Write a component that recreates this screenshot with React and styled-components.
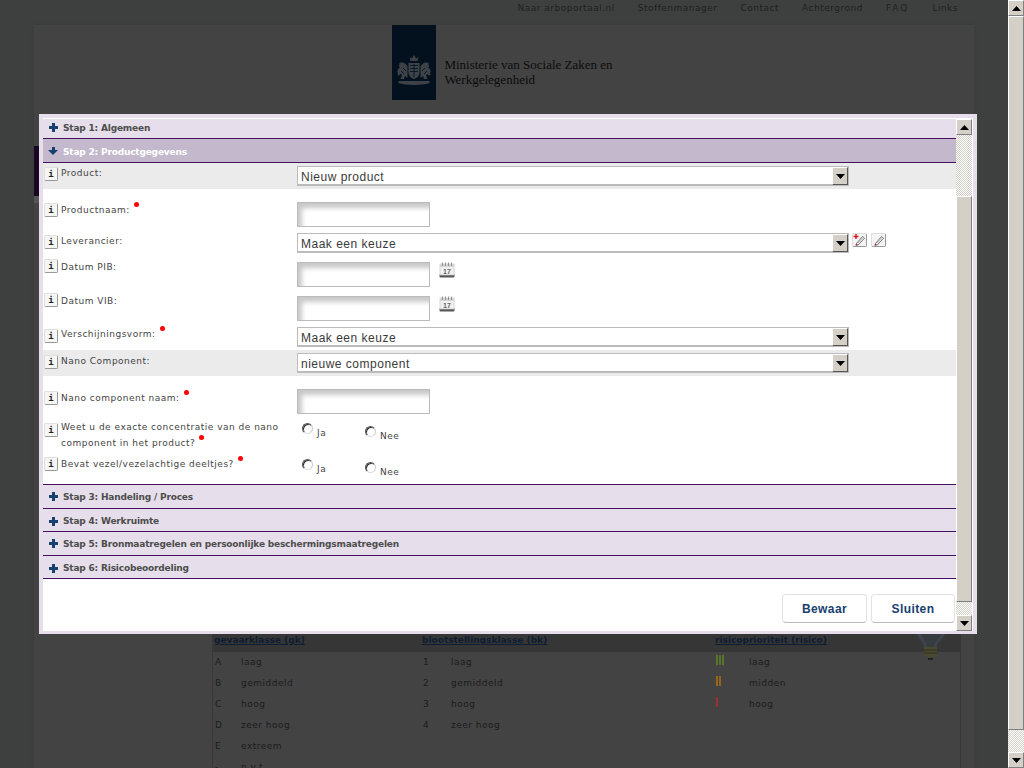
import React from "react";
import styled, { createGlobalStyle, css } from "styled-components";

const GlobalStyle = createGlobalStyle`
  html, body {
    margin: 0;
    padding: 0;
    height: 768px;
    overflow: hidden;
    background: #3d403f;
  }
  * { box-sizing: border-box; }
`;

const NAV_LINKS = ["Naar arboportaal.nl", "Stoffenmanager", "Contact", "Achtergrond", "FAQ", "Links"];

const ROWS = [
  { label: "Product:", kind: "select", value: "Nieuw product", gray: true, height: 26, labelTop: 4, fieldTop: 3, shift: -1 },
  { label: "Productnaam:", kind: "input", required: true, height: 44, labelTop: 14, fieldTop: 13, shift: -1 },
  { label: "Leverancier:", kind: "select", value: "Maak een keuze", edit: true, height: 26, labelTop: 2, fieldTop: 0, shift: -1 },
  { label: "Datum PIB:", kind: "date", height: 34, labelTop: 0, fieldTop: 3, shift: 1 },
  { label: "Datum VIB:", kind: "date", height: 34, labelTop: 0, fieldTop: 3, shift: 1 },
  { label: "Verschijningsvorm:", kind: "select", value: "Maak een keuze", required: true, height: 23, labelTop: 2, fieldTop: 0, shift: -3 },
  { label: "Nano Component:", kind: "select", value: "nieuwe component", gray: true, height: 26, labelTop: 5, fieldTop: 3, shift: -1 },
  { label: "Nano component naam:", kind: "input", required: true, height: 47, labelTop: 15, fieldTop: 13, shift: -1 },
  { label: "Weet u de exacte concentratie van de nano component in het product?", kind: "radio", required: true, height: 34, labelTop: 0, fieldTop: 0, shift: -3 },
  { label: "Bevat vezel/vezelachtige deeltjes?", kind: "radio", required: true, height: 27, labelTop: 0, fieldTop: 2, shift: -1 },
];

const LEGEND = [
  { title: "gevaarklasse (gk)", width: 208, keyWidth: 26, items: [["A", "laag"], ["B", "gemiddeld"], ["C", "hoog"], ["D", "zeer hoog"], ["E", "extreem"], ["-", "n.v.t."]] },
  { title: "blootstellingsklasse (bk)", width: 293, keyWidth: 28, items: [["1", "laag"], ["2", "gemiddeld"], ["3", "hoog"], ["4", "zeer hoog"]] },
  { title: "risicoprioriteit (risico)", width: 246, keyWidth: 33, items: [[3, "laag"], [2, "midden"], [1, "hoog"]] },
];

const BAR_COLORS = { 3: "#55752c", 2: "#98661a", 1: "#98303a" };

function Arrow({ up }) {
  return (
    <ArrowSvg width="9" height="5" viewBox="0 0 9 5">
      <path d={up ? "M4.5 0 L9 5 L0 5 Z" : "M0 0 L9 0 L4.5 5 Z"} fill="#000" />
    </ArrowSvg>
  );
}

function Scrollbar({ inner }) {
  return (
    <ScrollTrack $inner={inner}>
      <ScrollButton><Arrow up /></ScrollButton>
      <Checker $height={inner ? 61 : 0} />
      <Thumb $inner={inner} />
      <Checker $height={inner ? 13 : 22} />
      <ScrollButton><Arrow /></ScrollButton>
    </ScrollTrack>
  );
}

function PencilIcon({ plus }) {
  return (
    <IconButton>
      <svg width="13" height="12" viewBox="0 0 13 12">
        <path d="M3.5 9.5 L9.5 2.5 L11.5 4.2 L5.2 11 L3 11.2 Z" fill="#f4f4f4" stroke="#666" strokeWidth="0.9" />
        <path d="M5 9 L10 3.5" stroke="#aaa" strokeWidth="0.8" />
        <path d="M2.5 11.5 L3.2 9.6 L4.8 11 Z" fill="#d8141c" />
        {plus && <path d="M3 0 V5 M0.5 2.5 H5.5" stroke="#d8141c" strokeWidth="1.4" />}
      </svg>
    </IconButton>
  );
}

function CalendarIcon() {
  return (
    <CalendarSvg width="16" height="16" viewBox="0 0 16 16">
      <rect x="0.5" y="12" width="15" height="3.5" rx="1" fill="#55585a" />
      <rect x="1" y="2" width="14" height="11" fill="#f1f1f1" stroke="#c5c5c5" strokeWidth="0.7" />
      <rect x="1" y="2" width="14" height="3" fill="#d4d4d4" />
      <path d="M3.5 0.5 V4 M6.5 0.5 V4 M9.5 0.5 V4 M12.5 0.5 V4" stroke="#888" strokeWidth="0.9" />
      <text x="8" y="11.5" fontSize="7" fontWeight="700" textAnchor="middle" fontFamily="Liberation Sans, sans-serif" fill="#666">17</text>
    </CalendarSvg>
  );
}

function CoatOfArms() {
  return (
    <svg width="38" height="34" viewBox="0 0 38 34">
      <g fill="#3c4247">
        <path d="M15.5 7 L14.5 3 L16.8 4.4 L19 1 L21.2 4.4 L23.5 3 L22.5 7 Z" />
        <path d="M13.5 9 H24.5 V18 C24.5 22 22 24 19 25 C16 24 13.5 22 13.5 18 Z" />
        <path d="M12.5 12 C10 9 8 8 7 8.5 C5 8 3.5 9.5 4.5 11 C3.5 11.5 3.5 13 5 13.5 C2.5 15 1.5 17.5 3 19 C2 20 2.5 21.5 4 21.5 L5.5 20 L7 21 L5.5 25 L9 25 L10 22 L12.5 24 Z" />
        <path d="M25.5 12 C28 9 30 8 31 8.5 C33 8 34.5 9.5 33.5 11 C34.5 11.5 34.5 13 33 13.5 C35.5 15 36.5 17.5 35 19 C36 20 35.5 21.5 34 21.5 L32.5 20 L31 21 L32.5 25 L29 25 L28 22 L25.5 24 Z" />
        <path d="M4 27 H34 L35 29 C27 31.5 11 31.5 3 29 Z" />
      </g>
      <path d="M15 11.5 H23 M15 14.5 H23 M15 17.5 H23 M19 10 V23 M8 14 L11 17 M30 14 L27 17 M6 17 L9 20 M32 17 L29 20" stroke="#03101e" strokeWidth="0.8" />
    </svg>
  );
}

function Bulb() {
  return (
    <BulbSvg width="28" height="27" viewBox="0 0 28 27">
      <path d="M0 0 C2 6 7 8 7 13 H20 C20 8 26 6 28 0 Z" fill="#3e444e" />
      <path d="M4 0 C6 5 10 8 10 13 H17 C17 8 22 5 24 0 Z" fill="#373a3f" />
      <path d="M7 13 H20 V21 C20 24 7 24 7 21 Z" fill="#4a4a33" />
      <path d="M7 16 H20 M7 19 H20" stroke="#2f2e20" strokeWidth="1" />
      <path d="M11 24 H16 V26 H11 Z" fill="#222" />
    </BulbSvg>
  );
}

function Field({ row }) {
  if (row.kind === "select") {
    return (
      <FieldLine>
        <SelectBox>
          <SelectText>{row.value}</SelectText>
          <SelectArrow><Arrow /></SelectArrow>
        </SelectBox>
        {row.edit && (
          <EditIcons>
            <PencilIcon plus />
            <PencilIcon />
          </EditIcons>
        )}
      </FieldLine>
    );
  }
  if (row.kind === "radio") {
    return (
      <FieldLine>
        <RadioOption $width={63} $top={0}><Radio /><RadioLabel>Ja</RadioLabel></RadioOption>
        <RadioOption $top={3}><Radio /><RadioLabel>Nee</RadioLabel></RadioOption>
      </FieldLine>
    );
  }
  return (
    <FieldLine>
      <TextBox />
      {row.kind === "date" && <CalendarIcon />}
    </FieldLine>
  );
}

function App() {
  return (
    <>
      <GlobalStyle />
      <Page>
        <Main>
          <TopNav>
            {NAV_LINKS.map((link) => (
              <NavLink key={link} $wide={link === "FAQ"}>{link}</NavLink>
            ))}
          </TopNav>
          <Card>
            <Brand>
              <LogoTile><CoatOfArms /></LogoTile>
              <BrandName>Ministerie van Sociale Zaken en<br />Werkgelegenheid</BrandName>
            </Brand>
            <PurpleNav />
            <NavShadow />
            <Legend>
              {LEGEND.map((col) => (
                <LegendColumn key={col.title} $width={col.width}>
                  <LegendTitle>{col.title}</LegendTitle>
                  {col.items.map(([key, text]) => (
                    <LegendRow key={text}>
                      <LegendKey $width={col.keyWidth}>
                        {typeof key === "number" ? (
                          <Bars>
                            {Array.from({ length: key }).map((_, i) => (
                              <Bar key={i} $color={BAR_COLORS[key]} />
                            ))}
                          </Bars>
                        ) : key}
                      </LegendKey>
                      {text}
                    </LegendRow>
                  ))}
                </LegendColumn>
              ))}
              <Bulb />
            </Legend>
          </Card>
        </Main>
        <Scrollbar />

        <Modal>
          <ModalBody>
            <Steps>
              <StepHeader $height={20} $nudge={-1}>
                <StepIcon />Stap 1: Algemeen
              </StepHeader>
              <StepHeader $open $height={24} $nudge={1}>
                <StepIcon $open />Stap 2: Productgegevens
              </StepHeader>
              {ROWS.map((row) => (
                <FormRow key={row.label} $gray={row.gray} $height={row.height}>
                  <LabelCell $top={row.labelTop}>
                    <InfoButton>i</InfoButton>
                    <Label $shift={row.shift}>
                      {row.label}
                      {row.required && <RequiredDot />}
                    </Label>
                  </LabelCell>
                  <FieldCell $top={row.fieldTop}>
                    <Field row={row} />
                  </FieldCell>
                </FormRow>
              ))}
              <Divider />
              <StepHeader $height={24}><StepIcon />Stap 3: Handeling / Proces</StepHeader>
              <StepHeader $height={23} $nudge={1}><StepIcon />Stap 4: Werkruimte</StepHeader>
              <StepHeader $height={24}><StepIcon />Stap 5: Bronmaatregelen en persoonlijke beschermingsmaatregelen</StepHeader>
              <StepHeader $height={23} $nudge={1}><StepIcon />Stap 6: Risicobeoordeling</StepHeader>
              <Actions>
                <ActionButton $width={85}>Bewaar</ActionButton>
                <ActionButton $width={84}>Sluiten</ActionButton>
              </Actions>
            </Steps>
            <Scrollbar inner />
          </ModalBody>
        </Modal>
      </Page>
    </>
  );
}

const smallText = css`
  font: 9px/12px "DejaVu Sans", sans-serif;
  letter-spacing: 0.5px;
`;

const checker = css`
  background-color: #fff;
  background-image: repeating-conic-gradient(#d4d0c8 0 25%, #fff 0 50%);
  background-size: 2px 2px;
`;

const Page = styled.div`
  position: relative;
  display: flex;
  width: 1024px;
  height: 768px;
  overflow: hidden;
`;

const Main = styled.div`
  flex: 1;
  min-width: 0;
  padding: 0 34px;
`;

const TopNav = styled.div`
  display: flex;
  justify-content: flex-end;
  gap: 23px;
  height: 25px;
  padding: 2px 16px 0 0;
`;

const NavLink = styled.span`
  ${smallText}
  letter-spacing: ${(p) => (p.$wide ? "2px" : "0.5px")};
  color: #1f2121;
`;

const Card = styled.div`
  width: 940px;
  height: 800px;
  background: #434343;
  box-shadow: 0 0 2px #3a3a3a;
`;

const Brand = styled.div`
  display: flex;
  justify-content: center;
  gap: 8px;
  height: 121px;
  padding-right: 3px;
`;

const LogoTile = styled.div`
  display: flex;
  align-items: flex-end;
  justify-content: center;
  width: 44px;
  height: 75px;
  padding-bottom: 12px;
  background: #03101e;
`;

const BrandName = styled.div`
  padding-top: 32px;
  font: 13px/15px "Liberation Serif", serif;
  color: #0c0c0c;
`;

const PurpleNav = styled.div`
  height: 50px;
  background: #1a0623;
`;

const NavShadow = styled.div`
  height: 7px;
  background: #555;
`;

const Legend = styled.div`
  display: flex;
  position: relative;
  width: 749px;
  height: 300px;
  margin: 431px 0 0 178px;
  border-left: 1px solid #383838;
  border-right: 1px solid #383838;
`;

const LegendColumn = styled.div`
  flex: none;
  width: ${(p) => p.$width}px;
`;

const LegendTitle = styled.div`
  height: 18px;
  padding: 0 0 0 1px;
  background: #363636;
  font: bold 9px/12px "DejaVu Sans", sans-serif;
  color: #0f1d33;
  text-decoration: underline;
`;

const LegendRow = styled.div`
  ${smallText}
  display: flex;
  align-items: center;
  height: 21px;
  padding: 0 0 2px 2px;
  color: #1c1c1c;
`;

const LegendKey = styled.span`
  width: ${(p) => p.$width}px;
`;

const Bars = styled.span`
  display: inline-flex;
  gap: 1px;
`;

const Bar = styled.span`
  width: 2px;
  height: 10px;
  background: ${(p) => p.$color};
`;

const BulbSvg = styled.svg`
  position: absolute;
  top: 0;
  left: 704px;
`;

const ScrollTrack = styled.div`
  display: flex;
  flex-direction: column;
  flex: none;
  width: 16px;
  height: ${(p) => (p.$inner ? "512px" : "768px")};
  background: #d4d0c8;
`;

const ScrollButton = styled.div`
  display: flex;
  align-items: center;
  justify-content: center;
  flex: none;
  height: 16px;
  background: #d4d0c8;
  border-top: 1px solid #fff;
  border-left: 1px solid #fff;
  border-right: 1px solid #808080;
  border-bottom: 1px solid #808080;
`;

const ArrowSvg = styled.svg`
  display: block;
`;

const Checker = styled.div`
  flex: none;
  height: ${(p) => p.$height}px;
  ${checker}
`;

const Thumb = styled.div`
  flex: 1;
  background: #d4d0c8;
  border-top: 1px solid #fff;
  border-left: 1px solid #fff;
  border-right: 1px solid #808080;
  border-bottom: 1px solid #808080;
`;

const Modal = styled.div`
  position: absolute;
  top: 114px;
  left: 39px;
  width: 938px;
  height: 520px;
  padding: 4px 4px 3px;
  background: #e6deea;
`;

const ModalBody = styled.div`
  display: flex;
  height: 100%;
  padding: 1px 1px 0 0;
  background: #fff;
`;

const Steps = styled.div`
  flex: 1;
  min-width: 0;
`;

const StepHeader = styled.div`
  display: flex;
  align-items: center;
  gap: 5px;
  height: ${(p) => p.$height}px;
  padding-left: 6px;
  padding-top: ${(p) => (p.$nudge > 0 ? p.$nudge * 2 : 0)}px;
  padding-bottom: ${(p) => (p.$nudge < 0 ? -p.$nudge * 2 : 0)}px;
  background: ${(p) => (p.$open ? "#c4b8cd" : "#e6deea")};
  border-bottom: 1px solid #45125f;
  font: bold 9px/12px "DejaVu Sans", sans-serif;
  letter-spacing: -0.18px;
  color: ${(p) => (p.$open ? "#fff" : "#4d4d4d")};
`;

const StepIcon = styled.span`
  position: relative;
  flex: none;
  width: 9px;
  height: 9px;
  ${(p) =>
    p.$open
      ? css`
          background: linear-gradient(#17406f, #17406f) center 0 / 3px 4px no-repeat;
          &::after {
            content: "";
            position: absolute;
            left: -1px;
            top: 3px;
            border-left: 5.5px solid transparent;
            border-right: 5.5px solid transparent;
            border-top: 5px solid #17406f;
          }
        `
      : css`
          background:
            linear-gradient(#17406f, #17406f) center / 3px 9px no-repeat,
            linear-gradient(#17406f, #17406f) center / 9px 3px no-repeat;
        `}
`;

const FormRow = styled.div`
  display: flex;
  height: ${(p) => p.$height}px;
  background: ${(p) => (p.$gray ? "#ebebeb" : "#fff")};
`;

const LabelCell = styled.div`
  display: flex;
  align-items: flex-start;
  gap: 3px;
  flex: none;
  width: 254px;
  padding: ${(p) => p.$top}px 0 0 1px;
`;

const InfoButton = styled.span`
  display: flex;
  align-items: center;
  justify-content: center;
  flex: none;
  width: 14px;
  height: 14px;
  background: #f6f6f4;
  border: 1px solid #e0e0e0;
  border-right-color: #999;
  border-bottom-color: #999;
  border-radius: 2px;
  font: bold 9px/12px "DejaVu Sans Mono", monospace;
  color: #222;
`;

const Label = styled.span`
  width: 228px;
  margin-top: ${(p) => p.$shift}px;
  font: 9px/15px "DejaVu Sans", sans-serif;
  letter-spacing: 0.5px;
  color: #444;
`;

const RequiredDot = styled.span`
  display: inline-block;
  width: 5px;
  height: 5px;
  margin-left: 4px;
  vertical-align: 6px;
  border-radius: 50%;
  background: #f00;
`;

const FieldCell = styled.div`
  flex: 1;
  min-width: 0;
  padding-top: ${(p) => p.$top}px;
`;

const FieldLine = styled.div`
  display: flex;
  align-items: flex-start;
`;

const SelectBox = styled.div`
  display: flex;
  justify-content: space-between;
  width: 552px;
  height: 20px;
  background: #fff;
  border: 1px solid #bbb;
  border-bottom-width: 2px;
`;

const SelectText = styled.span`
  padding-left: 3px;
  font: 12px/20px "Liberation Sans", sans-serif;
  letter-spacing: 0.5px;
  color: #3a3a3a;
`;

const SelectArrow = styled.span`
  display: flex;
  align-items: center;
  justify-content: center;
  width: 16px;
  height: 18px;
  background: #d4d0c8;
  border-top: 1px solid #fff;
  border-left: 1px solid #fff;
  border-right: 1px solid #555;
  border-bottom: 1px solid #555;
`;

const EditIcons = styled.span`
  display: flex;
  gap: 4px;
  margin-left: 3px;
`;

const IconButton = styled.span`
  display: flex;
  align-items: center;
  justify-content: center;
  width: 15px;
  height: 14px;
  background: #f4f4f4;
  border: 1px solid #ddd;
  border-right-color: #999;
  border-bottom-color: #999;
  border-radius: 2px;
`;

const TextBox = styled.div`
  width: 133px;
  height: 25px;
  background: #fff;
  border: 1px solid #bbb;
  box-shadow: inset 6px 7px 5px -2px #c8c8c8;
`;

const CalendarSvg = styled.svg`
  flex: none;
  margin-left: 9px;
`;

const RadioOption = styled.span`
  display: flex;
  flex: none;
  width: ${(p) => (p.$width ? `${p.$width}px` : "auto")};
  margin-left: ${(p) => (p.$width ? "5px" : "0")};
  padding-top: ${(p) => p.$top}px;
`;

const Radio = styled.span`
  flex: none;
  width: 11px;
  height: 11px;
  border-radius: 50%;
  background: #fff;
  border: 1px solid;
  border-color: #555 #ccc #ddd #555;
  box-shadow: inset 1px 1px 0 #333;
`;

const RadioLabel = styled.span`
  ${smallText}
  margin: 4px 0 0 4px;
  color: #444;
`;

const Divider = styled.div`
  height: 1px;
  background: #45125f;
`;

const Actions = styled.div`
  display: flex;
  justify-content: flex-end;
  gap: 4px;
  padding: 15px 1px 0 0;
`;

const ActionButton = styled.button`
  width: ${(p) => p.$width}px;
  height: 29px;
  padding: 0;
  background: #fff;
  border: 1px solid #e2e2e2;
  border-bottom-color: #bbb;
  border-radius: 4px;
  font: bold 12px "Liberation Sans", sans-serif;
  letter-spacing: 0.4px;
  color: #17406f;
`;

export default App;
